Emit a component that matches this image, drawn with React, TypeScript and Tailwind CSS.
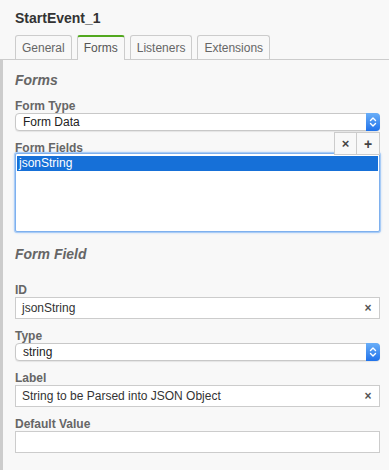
import React from "react";

function SelectBox({ value }: { value: string }) {
  return (
    <div className="flex h-[18px] w-full items-stretch rounded-[4px] border border-[#c8c8c8] bg-white shadow-[0_1px_1px_rgba(0,0,0,0.08)]">
      <div className="flex flex-1 items-center pl-[7px] text-[12px] leading-[14px] text-[#222]">{value}</div>
      <div className="-my-px -mr-px flex w-[14px] flex-col items-center justify-center rounded-r-[4px] bg-gradient-to-b from-[#69aef8] to-[#1f72ea]">
        <svg width="8" height="12" viewBox="0 0 8 12" fill="none" stroke="white" strokeWidth="1.4" strokeLinecap="round" strokeLinejoin="round">
          <path d="M1.5 4.5 L4 2 L6.5 4.5" />
          <path d="M1.5 7.5 L4 10 L6.5 7.5" />
        </svg>
      </div>
    </div>
  );
}

function TextBox({ value, clear }: { value?: string; clear?: boolean }) {
  return (
    <div className="flex h-[22px] w-full items-center border border-[#cccccc] bg-white">
      <div className="flex-1 pl-[6px] text-[12px] leading-[14px] text-[#333]">{value}</div>
      {clear && <div className="w-[22px] text-center text-[12px] font-bold leading-[14px] text-[#555]">×</div>}
    </div>
  );
}

function FieldLabel({ text }: { text: string }) {
  return <div className="text-[12px] font-bold leading-[14px] text-[#666]">{text}</div>;
}

export default function App() {
  const tabs = ["General", "Forms", "Listeners", "Extensions"];
  return (
    <div className="h-[470px] w-[389px] overflow-hidden bg-[#f8f8f8] font-['Liberation_Sans',Arial,sans-serif]">
      {/* Header */}
      <div className="px-[15px] pt-[10px] text-[14px] font-bold leading-[16px] text-[#333]">StartEvent_1</div>

      {/* Tabs */}
      <div className="mt-[9px] flex h-[25px] gap-[5px] border-b border-[#cccccc] pl-[15px]">
        {tabs.map((t) =>
          t === "Forms" ? (
            <div
              key={t}
              className="-mb-px flex h-[25px] items-center rounded-t-[3px] border-x border-t-2 border-x-[#cccccc] border-t-[#52a81f] bg-[#f8f8f8] px-[6px] pb-px text-[12px] leading-[14px] text-[#555]"
            >
              {t}
            </div>
          ) : (
            <div
              key={t}
              className="flex h-[24px] items-center rounded-t-[3px] border-x border-t border-[#cccccc] px-[6px] pt-px text-[12px] leading-[14px] text-[#666]"
            >
              {t}
            </div>
          )
        )}
      </div>

      {/* Body */}
      <div className="h-[410px] border-l-[3px] border-[#cccccc] pl-[12px] pr-[9px]">
        <div className="pt-[12px] text-[14px] font-bold italic leading-[16px] text-[#666]">Forms</div>

        <div className="mt-[11px]">
          <FieldLabel text="Form Type" />
          <SelectBox value="Form Data" />
        </div>

        <div className="mt-px flex h-[23px] items-end justify-between">
          <FieldLabel text="Form Fields" />
          <div className="flex h-[23px] self-start">
            <div className="flex w-[23px] items-center justify-center border border-[#cccccc] bg-[#f8f8f8] text-[13px] font-bold leading-none text-[#444]">×</div>
            <div className="flex w-[23px] items-center justify-center border border-l-0 border-[#cccccc] bg-[#f8f8f8] text-[14px] font-bold leading-none text-[#444]">+</div>
          </div>
        </div>
        <div className="-mt-[2px] h-[79px] rounded-[2px] border border-[#7eb0ee] bg-white px-px pt-[2px] shadow-[0_0_0_1px_#a9ccf6,0_0_3px_#7eb0ee]">
          <div className="h-[15px] bg-[#1670d8] pl-[2px] text-[12px] leading-[15px] text-white">jsonString</div>
        </div>

        <div className="mt-[14px] text-[14px] font-bold italic leading-[16px] text-[#666]">Form Field</div>

        <div className="mt-[21px]">
          <FieldLabel text="ID" />
          <TextBox value="jsonString" clear />
        </div>

        <div className="mt-[10px]">
          <FieldLabel text="Type" />
          <SelectBox value="string" />
        </div>

        <div className="mt-[10px]">
          <FieldLabel text="Label" />
          <TextBox value="String to be Parsed into JSON Object" clear />
        </div>

        <div className="mt-[10px]">
          <FieldLabel text="Default Value" />
          <TextBox />
        </div>
      </div>
    </div>
  );
}
